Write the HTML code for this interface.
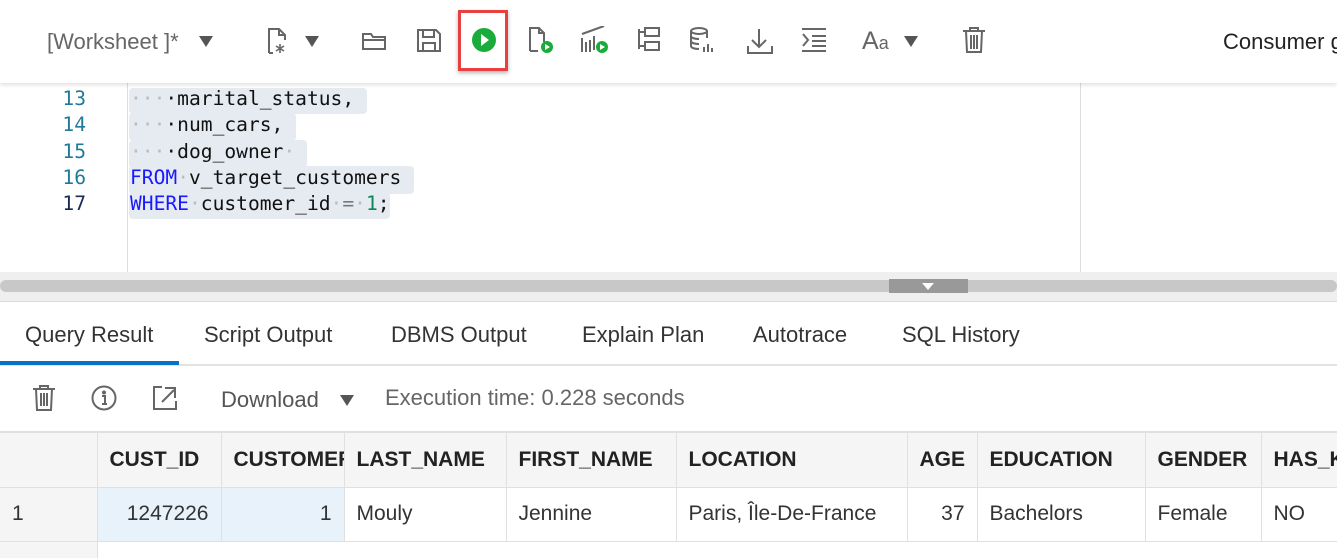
<!DOCTYPE html><html><head><meta charset="utf-8"><style>
*{margin:0;padding:0;box-sizing:border-box}
body{width:1337px;height:558px;overflow:hidden;background:#fff;font-family:"Liberation Sans",sans-serif;position:relative;color:#333}
.abs{position:absolute}
.tb{top:0;left:0;width:1337px;height:83px;background:#fff;box-shadow:0 2px 4px rgba(0,0,0,.12);z-index:2}
.ic{position:absolute;top:26px}
.mono{font-family:"DejaVu Sans Mono","Liberation Mono",monospace;font-size:19.6px}
.ln{position:absolute;left:40px;width:46px;text-align:right;color:#1f7a99}
.code{position:absolute;left:130px;white-space:pre;color:#111}
.sel{position:absolute;background:#e6ebf2;border-radius:4px}
.kw{color:#1a1aff}.dot{color:#bbb}
.tab{position:absolute;top:322px;font-size:22px;color:#333}
th,td{font-size:21px;text-align:left;padding:0 12px;border-right:1px solid #e0e0e0;border-bottom:1px solid #e0e0e0;white-space:nowrap;overflow:hidden}
th{background:#f5f5f5;height:55px;font-weight:bold;color:#222}
td{height:54px;color:#333}
.tw{position:absolute;top:431px;left:0;width:1337px;height:127px;overflow:hidden}
table{border-collapse:collapse;table-layout:fixed;width:1381px;border-top:2px solid #e0e0e0}
</style></head><body>
<div class="abs tb">
 <div class="abs" style="left:47px;top:29px;font-size:22px;color:#666">[Worksheet ]*</div>
 <div class="abs" style="left:199px;top:36px;border-left:7px solid transparent;border-right:7px solid transparent;border-top:11px solid #555"></div>
 <svg class="ic" style="left:264px" width="28" height="30" viewBox="0 0 28 30" fill="none" stroke="#666" stroke-width="2"><path d="M5 27V3h10l6 6v5M15 3v6h6M5 27h4"/><path d="M16 18v9M12 20l8 5M20 20l-8 5" stroke-width="1.6"/></svg>
 <div class="abs" style="left:305px;top:36px;border-left:7px solid transparent;border-right:7px solid transparent;border-top:11px solid #555"></div>
 <svg class="ic" style="left:361px" width="28" height="30" viewBox="0 0 28 30" fill="none" stroke="#666" stroke-width="2"><path d="M2 8h8l2 3h12v12H2z M2 14h22"/></svg>
 <svg class="ic" style="left:416px" width="28" height="30" viewBox="0 0 28 30" fill="none" stroke="#666" stroke-width="2"><path d="M2 4h18l4 4v17H2z M7 4v7h11V4 M7 25v-8h12v8"/></svg>
 <div class="abs" style="left:458px;top:10px;width:50px;height:61px;border:3px solid #e8403f;box-shadow:0 2px 4px rgba(0,0,0,.3)"></div>
 <svg class="ic" style="left:471px" width="28" height="30" viewBox="0 0 28 30"><circle cx="13" cy="14" r="12" fill="#1aac3a"/><path d="M10 8l8 6-8 6z" fill="#fff"/></svg>
 <svg class="ic" style="left:527px" width="30" height="30" viewBox="0 0 30 30" fill="none" stroke="#666" stroke-width="2"><path d="M3 25V2h9l5 5v9M12 2v5h5M3 25h8"/><circle cx="20" cy="21" r="6" fill="#1aac3a" stroke="none"/><path d="M18 18l5 3-5 3z" fill="#fff" stroke="none"/></svg>
 <svg class="ic" style="left:580px" width="32" height="30" viewBox="0 0 32 30" fill="none" stroke="#666" stroke-width="2"><path d="M2 26V12 M6 26V16 M10 26V14 M14 24V10 M2 8l22-8"/><circle cx="22" cy="21" r="6" fill="#1aac3a" stroke="none"/><path d="M20 18l5 3-5 3z" fill="#fff" stroke="none"/></svg>
 <svg class="ic" style="left:636px" width="28" height="30" viewBox="0 0 28 30" fill="none" stroke="#666" stroke-width="2"><path d="M3 3v20M3 6h6 M3 20h6 M9 2h14v8H9z M9 16h14v8H9z"/></svg>
 <svg class="ic" style="left:689px" width="28" height="30" viewBox="0 0 28 30" fill="none" stroke="#666" stroke-width="2"><ellipse cx="10" cy="5" rx="8" ry="3"/><path d="M2 5v15c0 2 4 3 8 3 M18 5v7 M2 10c0 2 4 3 8 3 M2 15c0 2 4 3 8 3 M15 26v-5 M19 26v-8 M23 26v-4"/></svg>
 <svg class="ic" style="left:746px" width="28" height="30" viewBox="0 0 28 30" fill="none" stroke="#666" stroke-width="2"><path d="M13 3v18 M6 14l7 7 7-7 M2 20v7h24v-7"/></svg>
 <svg class="ic" style="left:800px" width="28" height="30" viewBox="0 0 28 30" fill="none" stroke="#666" stroke-width="2"><path d="M2 3h24 M2 25h24 M12 10h14 M12 15h14 M12 20h14 M3 8l5 6-5 6"/></svg>
 <div class="abs" style="left:862px;top:27px;font-size:25px;color:#666">A<span style="font-size:18px">a</span></div>
 <div class="abs" style="left:904px;top:36px;border-left:7px solid transparent;border-right:7px solid transparent;border-top:11px solid #555"></div>
 <svg class="ic" style="left:961px" width="26" height="30" viewBox="0 0 26 30" fill="none" stroke="#666" stroke-width="2"><path d="M2 5h22 M9 5V2h8v3 M5 5l1 21h14l1-21 M10 9v14 M13 9v14 M16 9v14"/></svg>
 <div class="abs" style="left:1223px;top:29px;font-size:22px;color:#222;white-space:nowrap">Consumer g</div>
</div>
<div class="abs" style="left:127px;top:83px;width:1px;height:189px;background:#ddd"></div>
<div class="abs" style="left:1080px;top:83px;width:1px;height:189px;background:#ddd"></div>
<div class="sel" style="left:129px;top:88px;width:238px;height:26px"></div>
<div class="sel" style="left:129px;top:113px;width:167px;height:28px"></div>
<div class="sel" style="left:129px;top:140px;width:178px;height:28px"></div>
<div class="sel" style="left:129px;top:166px;width:285px;height:28px"></div>
<div class="sel" style="left:129px;top:192px;width:261px;height:27px"></div>
<div class="mono">
<div class="ln" style="top:87px">13</div><div class="ln" style="top:113px">14</div><div class="ln" style="top:140px">15</div><div class="ln" style="top:166px">16</div><div class="ln" style="top:192px;color:#1a2a55">17</div>
<div class="code" style="top:87px"><span class="dot">···</span>·marital_status,</div>
<div class="code" style="top:113px"><span class="dot">···</span>·num_cars,</div>
<div class="code" style="top:140px"><span class="dot">···</span>·dog_owner<span class="dot">·</span></div>
<div class="code" style="top:166px"><span class="kw">FROM</span><span class="dot">·</span>v_target_customers</div>
<div class="code" style="top:192px"><span class="kw">WHERE</span><span class="dot">·</span>customer_id<span class="dot">·</span><span style="color:#777">=</span><span class="dot">·</span><span style="color:#098658">1</span>;</div>
</div>
<div class="abs" style="left:0;top:272px;width:1337px;height:30px;background:#efefef;border-bottom:1px solid #ddd"></div>
<div class="abs" style="left:0;top:280px;width:1337px;height:12px;background:#c8c8c8;border-radius:6px"></div>
<div class="abs" style="left:889px;top:279px;width:79px;height:14px;background:#999"></div>
<div class="abs" style="left:922px;top:283px;border-left:6px solid transparent;border-right:6px solid transparent;border-top:7px solid #fff"></div>
<div class="tab" style="left:25px">Query Result</div>
<div class="tab" style="left:204px">Script Output</div>
<div class="tab" style="left:391px">DBMS Output</div>
<div class="tab" style="left:582px">Explain Plan</div>
<div class="tab" style="left:753px">Autotrace</div>
<div class="tab" style="left:902px">SQL History</div>
<div class="abs" style="left:0;top:364px;width:1337px;height:2px;background:#e3e3e3"></div>
<div class="abs" style="left:0;top:361px;width:179px;height:4px;background:#0a72c4"></div>
<svg class="abs" style="left:32px;top:384px" width="24" height="28" viewBox="0 0 24 28" fill="none" stroke="#666" stroke-width="2"><path d="M1 5h22 M8 5V2h8v3 M4 5l1 21h14l1-21 M9 9v13 M12 9v13 M15 9v13"/></svg>
<svg class="abs" style="left:91px;top:385px" width="28" height="28" viewBox="0 0 28 28" fill="none" stroke="#666" stroke-width="2"><circle cx="13" cy="13" r="11.5"/><path d="M11 11h3v8 M11 19h5"/><circle cx="13" cy="7.5" r="1" fill="#666"/></svg>
<svg class="abs" style="left:152px;top:385px" width="28" height="28" viewBox="0 0 28 28" fill="none" stroke="#666" stroke-width="2"><path d="M10 2H2v22h22v-8 M10 17L22 5 M13 3h10v10"/></svg>
<div class="abs" style="left:221px;top:387px;font-size:22px;color:#555">Download</div>
<div class="abs" style="left:340px;top:395px;border-left:7px solid transparent;border-right:7px solid transparent;border-top:11px solid #555"></div>
<div class="abs" style="left:385px;top:385px;font-size:22px;color:#666">Execution time: 0.228 seconds</div>
<div class="tw"><table>
<colgroup><col style="width:97px"><col style="width:124px"><col style="width:123px"><col style="width:162px"><col style="width:170px"><col style="width:231px"><col style="width:70px"><col style="width:168px"><col style="width:116px"><col style="width:120px"></colgroup>
<tr><th></th><th>CUST_ID</th><th>CUSTOMER_ID</th><th>LAST_NAME</th><th>FIRST_NAME</th><th>LOCATION</th><th>AGE</th><th>EDUCATION</th><th>GENDER</th><th>HAS_KIDS</th></tr>
<tr><td style="background:#f5f5f5">1</td><td style="background:#e8f2fa;text-align:right;padding-right:12px">1247226</td><td style="background:#e8f2fa;text-align:right">1</td><td>Mouly</td><td>Jennine</td><td>Paris, Île-De-France</td><td style="text-align:right">37</td><td>Bachelors</td><td>Female</td><td>NO</td></tr>
<tr><td style="background:#f5f5f5;border-bottom:none"></td><td colspan="9" style="border:none"></td></tr>
</table></div>
</body></html>
